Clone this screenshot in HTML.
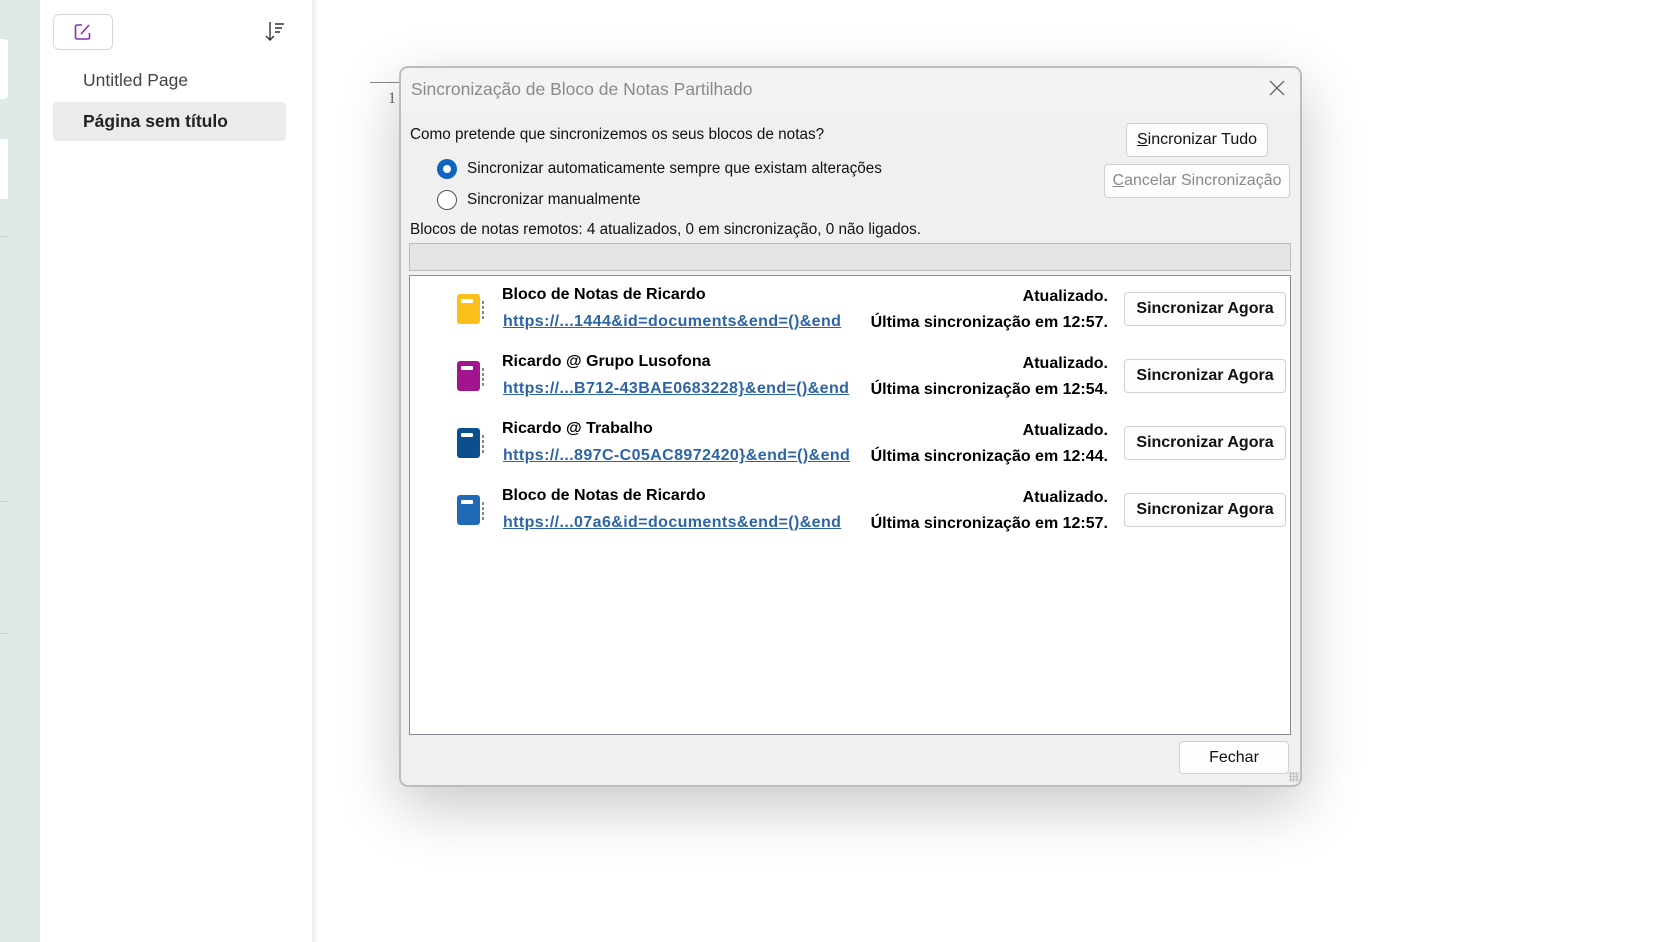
<!DOCTYPE html>
<html><head><meta charset="utf-8"><style>
*{margin:0;padding:0;box-sizing:border-box}
body{width:1666px;height:942px;position:relative;overflow:hidden;background:#fff;font-family:"Liberation Sans",sans-serif}
.a{position:absolute}
.strip{left:0;top:0;width:40px;height:942px;background:#dfe9e5}
.side{left:40px;top:0;width:272px;height:942px;background:#fff}
.sep{left:312px;top:0;width:6px;height:942px;background:linear-gradient(90deg,#ececec,#fafafa)}
.btn{background:#fdfdfd;border:1px solid #d0d0d0;border-radius:4px;text-align:center;color:#111;font-size:16px}
.dlg{left:399px;top:66px;width:903px;height:721px;background:#f0f0f0;border:2px solid #bdbdbd;border-radius:9px;box-shadow:0 20px 60px rgba(0,0,0,.22)}
.t{font-size:15.3px;color:#111;white-space:nowrap}
.b{font-weight:bold;font-size:16px;color:#000;white-space:nowrap}
.lnk{font-weight:bold;font-size:16px;letter-spacing:0.4px;color:#2c64a6;text-decoration:underline;white-space:nowrap}
.nb{width:23px;height:30px;border-radius:3px}
.nb:before{content:"";position:absolute;left:4px;top:5px;width:12px;height:4px;background:#fff;border-radius:1px}
.nb:after{content:"";position:absolute;right:-4px;top:7px;width:2px;height:18px;background:repeating-linear-gradient(#888 0 3px,transparent 3px 5px)}
</style></head><body>
<div class="a strip"></div>
<div class="a" style="left:0;top:39px;width:8px;height:60px;background:#fff;border-radius:0 4px 4px 0"></div>
<div class="a" style="left:0;top:139px;width:8px;height:60px;background:#fff"></div>
<div class="a" style="left:0;top:236px;width:8px;height:1px;background:#c9d1ce"></div>
<div class="a" style="left:0;top:501px;width:8px;height:1px;background:#c9d1ce"></div>
<div class="a" style="left:0;top:633px;width:8px;height:1px;background:#c9d1ce"></div>
<div class="a side"></div>
<div class="a sep"></div>
<div class="a" style="left:53px;top:14px;width:60px;height:36px;border:1px solid #d8d8d8;border-radius:6px;background:#fff"></div>
<svg class="a" style="left:73px;top:22px" width="20" height="20" viewBox="0 0 20 20"><path d="M9 3H4a1.5 1.5 0 0 0-1.5 1.5v11A1.5 1.5 0 0 0 4 17h11a1.5 1.5 0 0 0 1.5-1.5V11" fill="none" stroke="#8a2fb8" stroke-width="1.6"/><path d="M8 12l8-9" stroke="#8a2fb8" stroke-width="1.6"/></svg>
<svg class="a" style="left:264px;top:20px" width="24" height="24" viewBox="0 0 24 24"><path d="M6 2v18M2 16l4 4 4-4" fill="none" stroke="#333" stroke-width="1.4"/><path d="M11 4h9M11 8h7M11 12h5" stroke="#333" stroke-width="1.4"/></svg>
<div class="a" style="left:83px;top:70px;font-size:17.5px;color:#444">Untitled Page</div>
<div class="a" style="left:53px;top:102px;width:233px;height:39px;background:#ebebeb;border-radius:4px"></div>
<div class="a" style="left:83px;top:111px;font-size:17.5px;font-weight:bold;color:#222">Página sem título</div>
<div class="a" style="left:370px;top:82px;width:30px;height:1px;background:#888"></div>
<div class="a" style="left:388px;top:90px;font-size:16px;color:#666;font-family:'Liberation Serif',serif">1</div>

<div class="a dlg">
<div class="a" style="left:0;top:0;width:899px;height:43px;background:#f3f3f3;border-radius:8px 8px 0 0"></div>
<div class="a" style="left:10px;top:11px;font-size:17.5px;color:#8a8a8a">Sincronização de Bloco de Notas Partilhado</div>
<svg class="a" style="left:867px;top:11px" width="18" height="18" viewBox="0 0 18 18"><path d="M2 2l14 14M16 2L2 16" stroke="#666" stroke-width="1.3"/></svg>
<div class="a t" style="left:9px;top:58px">Como pretende que sincronizemos os seus blocos de notas?</div>
<div class="a" style="left:36px;top:91px;width:20px;height:20px;border-radius:50%;background:#0f64c0"></div>
<div class="a" style="left:42px;top:97px;width:8px;height:8px;border-radius:50%;background:#fff"></div>
<div class="a t" style="left:66px;top:92px">Sincronizar automaticamente sempre que existam alterações</div>
<div class="a" style="left:36px;top:122px;width:20px;height:20px;border-radius:50%;border:1.5px solid #555;background:#fff"></div>
<div class="a t" style="left:66px;top:123px">Sincronizar manualmente</div>
<div class="a t" style="left:9px;top:153px">Blocos de notas remotos: 4 atualizados, 0 em sincronização, 0 não ligados.</div>
<div class="a" style="left:8px;top:175px;width:882px;height:28px;background:#e4e4e4;border:1px solid #bcbcbc"></div>
<div class="a btn" style="left:725px;top:55px;width:142px;height:34px;line-height:32px"><u>S</u>incronizar Tudo</div>
<div class="a btn" style="left:703px;top:96px;width:186px;height:34px;line-height:32px;color:#888"><u>C</u>ancelar Sincronização</div>
<div class="a" style="left:8px;top:207px;width:882px;height:460px;background:#fff;border:1.5px solid #8a8a95"></div>
<div class="a btn" style="left:778px;top:673px;width:110px;height:33px;line-height:31px">Fechar</div>
<div class="a" style="left:888px;top:704px;width:10px;height:10px;background:radial-gradient(circle,#bbb 1px,transparent 1.5px) 0 0/3px 3px"></div>
</div>

<div class="a nb" style="left:457px;top:294px;background:#fbbf1a"></div>
<div class="a nb" style="left:457px;top:361px;background:#a3148f"></div>
<div class="a nb" style="left:457px;top:428px;background:#0c4f8e"></div>
<div class="a nb" style="left:457px;top:495px;background:#1f6bb5"></div>

<div class="a b" style="left:502px;top:286px">Bloco de Notas de Ricardo</div>
<div class="a lnk" style="left:503px;top:313px">https://...1444&amp;id=documents&amp;end=()&amp;end</div>
<div class="a b" style="left:502px;top:353px">Ricardo @ Grupo Lusofona</div>
<div class="a lnk" style="left:503px;top:380px">https://...B712-43BAE0683228}&amp;end=()&amp;end</div>
<div class="a b" style="left:502px;top:420px">Ricardo @ Trabalho</div>
<div class="a lnk" style="left:503px;top:447px">https://...897C-C05AC8972420}&amp;end=()&amp;end</div>
<div class="a b" style="left:502px;top:487px">Bloco de Notas de Ricardo</div>
<div class="a lnk" style="left:503px;top:514px">https://...07a6&amp;id=documents&amp;end=()&amp;end</div>

<div class="a b" style="right:558px;top:288px">Atualizado.</div>
<div class="a b" style="right:558px;top:314px">Última sincronização em 12:57.</div>
<div class="a b" style="right:558px;top:355px">Atualizado.</div>
<div class="a b" style="right:558px;top:381px">Última sincronização em 12:54.</div>
<div class="a b" style="right:558px;top:422px">Atualizado.</div>
<div class="a b" style="right:558px;top:448px">Última sincronização em 12:44.</div>
<div class="a b" style="right:558px;top:489px">Atualizado.</div>
<div class="a b" style="right:558px;top:515px">Última sincronização em 12:57.</div>

<div class="a btn" style="left:1124px;top:292px;width:162px;height:34px;line-height:32px;font-weight:bold">Sincronizar Agora</div>
<div class="a btn" style="left:1124px;top:359px;width:162px;height:34px;line-height:32px;font-weight:bold">Sincronizar Agora</div>
<div class="a btn" style="left:1124px;top:426px;width:162px;height:34px;line-height:32px;font-weight:bold">Sincronizar Agora</div>
<div class="a btn" style="left:1124px;top:493px;width:162px;height:34px;line-height:32px;font-weight:bold">Sincronizar Agora</div>
</body></html>
